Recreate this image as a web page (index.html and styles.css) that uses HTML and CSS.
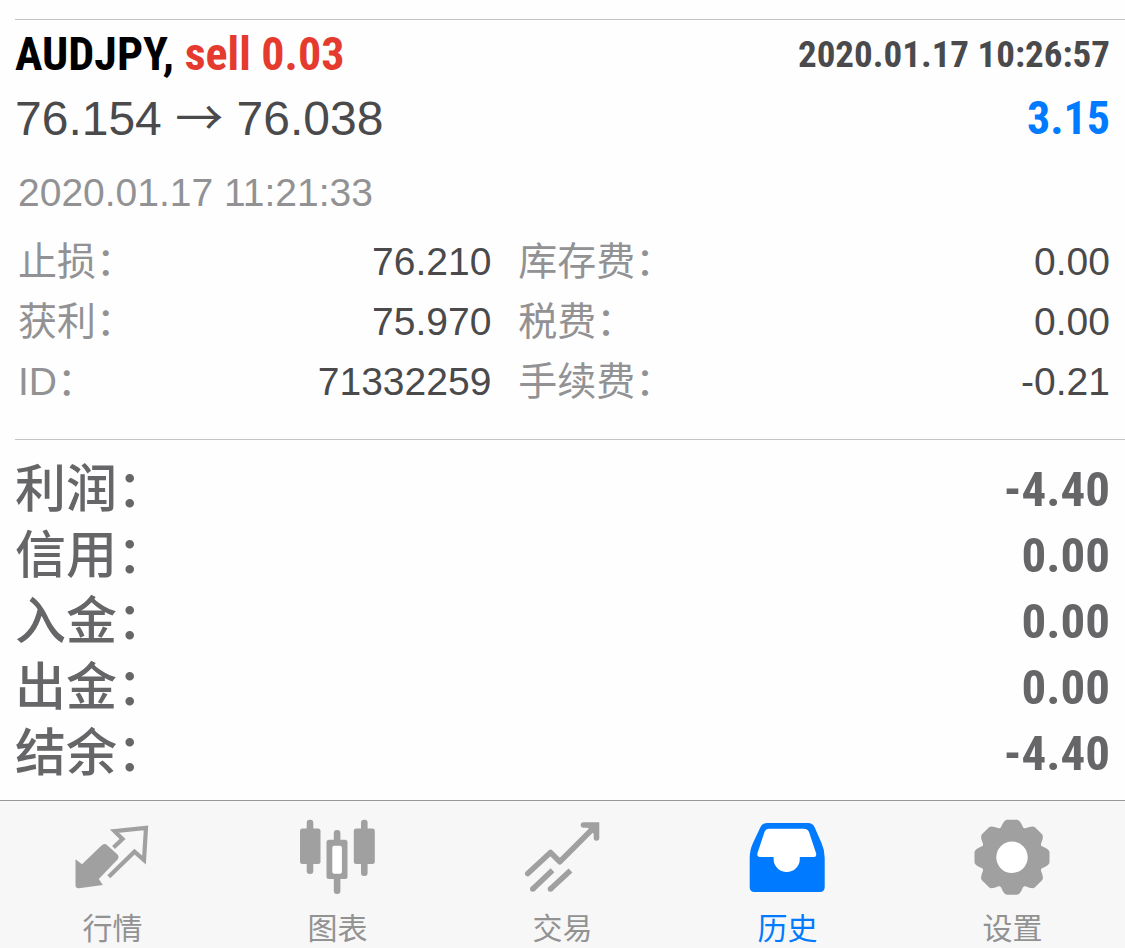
FILE: index.html
```html
<!DOCTYPE html>
<html lang="zh-CN">
<head>
<meta charset="utf-8">
<meta name="viewport" content="width=device-width, initial-scale=1">
<title>历史</title>
<link rel="stylesheet" href="styles.css">
</head>
<body>
<main class="history">
  <article class="deal">
    <header class="deal-head">
      <h1 class="deal-title">AUDJPY, <span class="deal-side">sell 0.03</span></h1>
      <time class="deal-closed">2020.01.17 10:26:57</time>
    </header>
    <div class="deal-result">
      <span class="deal-prices">76.154 <span class="arrow">→</span> 76.038</span>
      <strong class="deal-profit">3.15</strong>
    </div>
    <div class="deal-details">
      <time class="deal-opened">2020.01.17 11:21:33</time>
      <div class="detail-columns">
        <dl class="detail-list">
          <div class="row"><dt>止损：</dt><dd>76.210</dd></div>
          <div class="row"><dt>获利：</dt><dd>75.970</dd></div>
          <div class="row"><dt>ID：</dt><dd>71332259</dd></div>
        </dl>
        <dl class="detail-list">
          <div class="row"><dt>库存费：</dt><dd>0.00</dd></div>
          <div class="row"><dt>税费：</dt><dd>0.00</dd></div>
          <div class="row"><dt>手续费：</dt><dd>-0.21</dd></div>
        </dl>
      </div>
    </div>
  </article>
  <dl class="totals">
    <div class="row"><dt>利润：</dt><dd>-4.40</dd></div>
    <div class="row"><dt>信用：</dt><dd>0.00</dd></div>
    <div class="row"><dt>入金：</dt><dd>0.00</dd></div>
    <div class="row"><dt>出金：</dt><dd>0.00</dd></div>
    <div class="row"><dt>结余：</dt><dd>-4.40</dd></div>
  </dl>
</main>
<nav class="tabs">
  <a class="tab" href="#quotes">
    <svg class="tab-icon" viewBox="0 0 76 76" aria-hidden="true">
      <path fill="currentColor" d="M.5 40.3 7 45.3 26 27Q29.500 23.500 32.500 26.500L42.500 35.500Q44.500 38 42.500 40.500L23.800 60 27.800 66 4 69.300Q.5 69.500.5 66Z"/>
      <path fill="none" stroke="currentColor" stroke-width="4.200" d="M38.500 28.500 47.500 20 39.500 12.200 71 8.800 69 41 59.500 32.700 33.800 57.700"/>
    </svg>
    <span>行情</span>
  </a>
  <a class="tab" href="#charts">
    <svg class="tab-icon" viewBox="0 0 76 76" aria-hidden="true">
      <g fill="currentColor">
        <rect x="0" y="9.500" width="20.500" height="35.500" rx="2.500"/>
        <rect x="6.700" y=".8" width="6.600" height="54.200" rx="3"/>
        <rect x="26.500" y="20.700" width="21" height="39.300" rx="2.500"/>
        <rect x="33.800" y="11" width="6.600" height="64" rx="3"/>
        <rect x="53.800" y="9.500" width="21" height="35.500" rx="2.500"/>
        <rect x="61" y=".8" width="6.600" height="56.200" rx="3"/>
      </g>
      <rect x="32.300" y="26.800" width="9.600" height="28" rx="2" fill="#fff"/>
    </svg>
    <span>图表</span>
  </a>
  <a class="tab" href="#trade">
    <svg class="tab-icon" viewBox="0 0 76 76" aria-hidden="true">
      <g fill="none" stroke="currentColor" stroke-width="5.600">
        <path stroke-linecap="round" stroke-linejoin="round" d="M2.800 54.500 25.500 33.500 34.800 42.700 69 8.500"/>
        <path stroke-linecap="round" d="M58.500 6H71.500V19"/>
        <path d="M7.800 70 27.500 51.200M25.500 70 45.500 51.500"/>
      </g>
      <g fill="currentColor"><circle cx="7.800" cy="70" r="2.800"/><circle cx="25.500" cy="70" r="2.800"/><path d="M62 8H70V16Z"/></g>
    </svg>
    <span>交易</span>
  </a>
  <a class="tab tab-active" href="#history" aria-current="page">
    <svg class="tab-icon" viewBox="0 0 76 76" aria-hidden="true">
      <path fill="currentColor" d="M17 4H58Q62.500 4 64.500 8L71.500 24Q74.700 31 74.700 39V68Q74.700 73 69.700 73H4.500Q-.3 73-.3 68V39Q-.3 31 3 24L10.500 8Q12.500 4 17 4Z"/>
      <path fill="#fff" d="M19 9.800H53.500Q57.500 9.800 59 13L66 34Q67 38 64 38H49.800V40A13.100 13.100 0 0 1 23.600 40V38H10Q6.500 38 7.500 34L14.500 13Q16 9.800 19 9.800Z"/>
    </svg>
    <span>历史</span>
  </a>
  <a class="tab" href="#settings">
    <svg class="tab-icon" viewBox="0 0 76 76" aria-hidden="true">
      <defs><path id="tooth" d="M-14-27-11-30Q-8-37.500-5-37.500H5Q8-37.500 11-30L14-27Z"/></defs>
      <g transform="translate(37 38.300)" fill="currentColor">
        <circle r="30"/>
        <use href="#tooth"/><use href="#tooth" transform="rotate(45)"/>
        <use href="#tooth" transform="rotate(90)"/><use href="#tooth" transform="rotate(135)"/>
        <use href="#tooth" transform="rotate(180)"/><use href="#tooth" transform="rotate(225)"/>
        <use href="#tooth" transform="rotate(270)"/><use href="#tooth" transform="rotate(315)"/>
        <circle r="15.700" fill="#fff"/>
      </g>
    </svg>
    <span>设置</span>
  </a>
</nav>
</body>
</html>
```

FILE: styles.css
```css
:root {
  --sans: "Liberation Sans", "Noto Sans CJK SC", sans-serif;
  --narrow: "Roboto Condensed", "Liberation Sans Narrow", "Arial Narrow", "Liberation Sans", sans-serif;
  --edge: 15px;
}

* {
  box-sizing: border-box;
}

body {
  margin: 0;
  min-height: 100vh;
  display: flex;
  flex-direction: column;
  background: #fefefe;
  color: #4a4a4c;
  font-family: var(--sans);
}

dl,
dd,
h1 {
  margin: 0;
}

.history {
  flex: 1;
  padding: 19px 0 14px var(--edge);
}

.deal {
  border-top: 1px solid #c4c4c8;
  border-bottom: 1px solid #c4c4c8;
  padding: 2px var(--edge) 28px 0;
}

.deal-head,
.deal-result,
.row {
  display: flex;
  justify-content: space-between;
  align-items: center;
  white-space: nowrap;
}

.deal-head,
.deal-result {
  height: 64px;
}

.deal-title,
.deal-closed,
.deal-profit {
  font-family: var(--narrow);
  font-weight: 700;
}

.deal-title {
  font-size: 46px;
  color: #000;
}

.deal-side {
  color: #e53b2f;
}

.deal-closed {
  font-size: 37px;
}

.deal-prices {
  font-size: 48px;
}

.arrow {
  font-family: "Noto Sans CJK SC", sans-serif;
  line-height: 1;
}

.deal-profit {
  font-size: 46px;
  color: #007aff;
}

.deal-details {
  padding-left: 3px;
  font-size: 39px;
}

.deal-opened {
  display: block;
  line-height: 60px;
  padding: 13px 0 8px;
  color: #929294;
}

.detail-columns {
  display: grid;
  grid-template-columns: 4fr 5fr;
  gap: 27px;
}

.detail-list .row {
  height: 60px;
  line-height: 1;
}

.detail-list dt {
  color: #929294;
}

.totals {
  padding: 16px var(--edge) 0 0;
  color: #666668;
}

.totals .row {
  height: 66px;
  line-height: 1;
}

.totals dt {
  font-size: 51px;
  font-weight: 500;
}

.totals dd {
  font-family: var(--narrow);
  font-size: 49px;
  font-weight: 700;
}

.tabs {
  display: grid;
  grid-template-columns: repeat(5, 1fr);
  border-top: 1px solid #98989c;
  background: #f7f7f7;
}

.tab {
  display: flex;
  flex-direction: column;
  align-items: center;
  gap: 10px;
  padding-top: 18px;
  color: #a0a0a0;
  font-family: "Noto Sans CJK SC", sans-serif;
  font-size: 30px;
  line-height: 43px;
  text-decoration: none;
}

.tab span {
  color: #929292;
}

.tab-icon {
  width: 76px;
  height: 76px;
  overflow: visible;
}

.tab-active,
.tab-active span {
  color: #007aff;
}
```
